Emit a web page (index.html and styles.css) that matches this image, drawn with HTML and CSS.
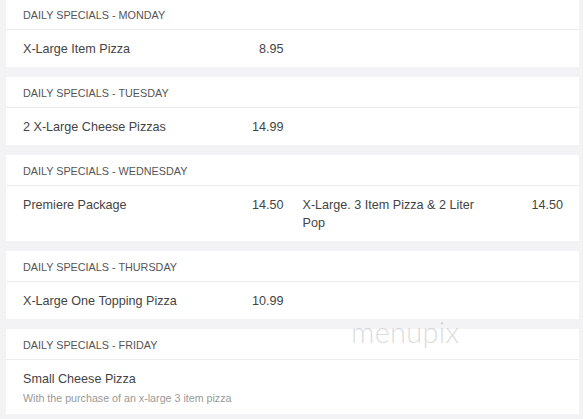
FILE: index.html
```html
<!DOCTYPE html>
<html lang="en">
<head>
    <meta charset="UTF-8">
    <meta name="viewport" content="width=device-width, initial-scale=1.0">
    <title>Daily Specials</title>
    <link rel="stylesheet" href="styles.css">
</head>
<body>
    <div class="menu">
        <div class="section">
            <div class="section-title">Daily Specials - Monday</div>
            <div class="items">
                <div class="item">
                    <div class="item-name">X-Large Item Pizza</div>
                    <div class="item-price">8.95</div>
                </div>
            </div>
        </div>

        <div class="section">
            <div class="section-title">Daily Specials - Tuesday</div>
            <div class="items">
                <div class="item">
                    <div class="item-name">2 X-Large Cheese Pizzas</div>
                    <div class="item-price">14.99</div>
                </div>
            </div>
        </div>

        <div class="section">
            <div class="section-title">Daily Specials - Wednesday</div>
            <div class="items">
                <div class="item">
                    <div class="item-name">Premiere Package</div>
                    <div class="item-price">14.50</div>
                </div>
                <div class="item">
                    <div class="item-name">X-Large. 3 Item Pizza &amp; 2 Liter Pop</div>
                    <div class="item-price">14.50</div>
                </div>
            </div>
        </div>

        <div class="section">
            <div class="section-title">Daily Specials - Thursday</div>
            <div class="items">
                <div class="item">
                    <div class="item-name">X-Large One Topping Pizza</div>
                    <div class="item-price">10.99</div>
                </div>
            </div>
        </div>

        <div class="section">
            <div class="section-title">Daily Specials - Friday</div>
            <div class="items">
                <div class="item">
                    <div class="item-name">
                        Small Cheese Pizza
                        <div class="item-desc">With the purchase of an x-large 3 item pizza</div>
                    </div>
                    <div class="item-price"></div>
                </div>
            </div>
        </div>

        <div class="watermark">menupix</div>
    </div>
</body>
</html>
```

FILE: styles.css
```css
* {
    margin: 0;
    padding: 0;
    box-sizing: border-box;
}

body {
    font-family: "Liberation Sans", Arial, sans-serif;
    background: #fff;
    color: #444;
    overflow: hidden;
}

.menu {
    position: relative;
    width: 583px;
    min-height: calc(100vh + 1px);
    padding: 0 4px 0 6px;
    margin-top: -1px;
    background: #f3f3f5;
    display: flex;
    flex-direction: column;
    gap: 10px;
}

.section {
    background: #fff;
}

.section-title {
    padding: 9px 17px 7px;
    font-size: 10.8px;
    line-height: 14px;
    text-transform: uppercase;
    color: #555;
    border-bottom: 1px solid #ececee;
}

.items {
    display: grid;
    grid-template-columns: 1fr 1fr;
    column-gap: 19px;
    padding: 0 16px 0 17px;
}

.item {
    display: flex;
    justify-content: space-between;
    gap: 16px;
    padding: 10px 0 9px;
    font-size: 12.6px;
    line-height: 18px;
}

.item-name {
    max-width: 182px;
}

.item-price {
    flex-shrink: 0;
    text-align: right;
}

.item-desc {
    margin-top: 3px;
    font-size: 10.7px;
    line-height: 14px;
    color: #999;
    white-space: nowrap;
}

.watermark {
    position: absolute;
    left: 351px;
    top: 315px;
    font-family: Lato, "DejaVu Sans", sans-serif;
    font-weight: 300;
    font-size: 29px;
    letter-spacing: 0.3px;
    color: rgba(175, 175, 181, 0.45);
    pointer-events: none;
}
```
